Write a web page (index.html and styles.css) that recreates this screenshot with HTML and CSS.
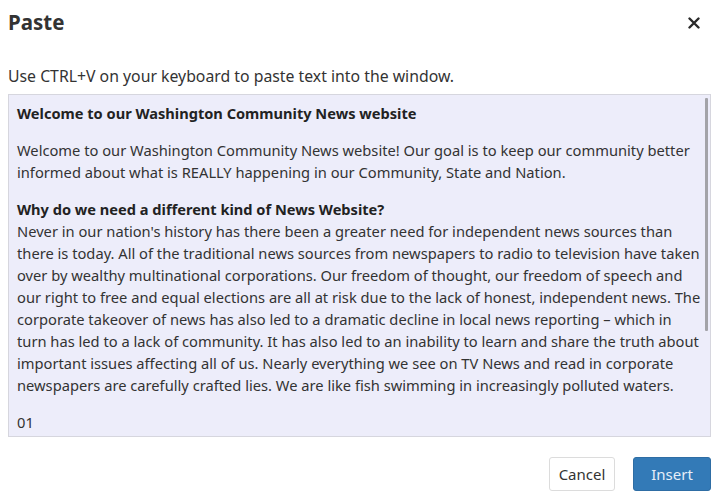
FILE: index.html
```html
<!DOCTYPE html>
<html>
<head>
<meta charset="utf-8">
<link rel="stylesheet" href="styles.css">
</head>
<body>
<div class="dialog">
  <div class="header">
    <h1 class="title">Paste</h1>
    <button class="close" aria-label="Close">
      <svg width="12" height="12" viewBox="0 0 12 12"><path d="M1.5 1.5 L10.5 10.5 M10.5 1.5 L1.5 10.5" stroke="#2a2a2a" stroke-width="2.4" stroke-linecap="round"/></svg>
    </button>
  </div>
  <p class="hint">Use CTRL+V on your keyboard to paste text into the window.</p>
  <div class="pastebox">
    <div class="pastecontent">
      <h2 class="ph">Welcome to our Washington Community News website</h2>
      <p class="pp">Welcome to our Washington Community News website! Our goal is to keep our community better informed about what is REALLY happening in our Community, State and Nation.</p>
      <h2 class="ph tight">Why do we need a different kind of News Website?</h2>
      <p class="pp">Never in our nation's history has there been a greater need for independent news sources than there is today. All of the traditional news sources from newspapers to radio to television have taken over by wealthy multinational corporations. Our freedom of thought, our freedom of speech and our right to free and equal elections are all at risk due to the lack of honest, independent news. The corporate takeover of news has also led to a dramatic decline in local news reporting – which in turn has led to a lack of community. It has also led to an inability to learn and share the truth about important issues affecting all of us. Nearly everything we see on TV News and read in corporate newspapers are carefully crafted lies. We are like fish swimming in increasingly polluted waters.</p>
      <p class="pp">01</p>
    </div>
    <div class="thumb"></div>
  </div>
  <div class="footer">
    <button class="btn cancel">Cancel</button>
    <button class="btn insert">Insert</button>
  </div>
</div>
</body>
</html>
```

FILE: styles.css
```css
html, body {
  margin: 0;
  padding: 0;
  background: #fff;
}
body {
  font-family: "Noto Sans", "Open Sans", sans-serif;
  color: #333;
}
.dialog {
  width: 718px;
  height: 498px;
  padding: 0 7px 0 8px;
  box-sizing: border-box;
  display: flex;
  flex-direction: column;
}
.header {
  display: flex;
  justify-content: space-between;
  align-items: center;
  height: 42px;
  padding-top: 2px;
  box-sizing: border-box;
}
.title {
  margin: 0;
  font-size: 20.5px;
  font-weight: 700;
  color: #333;
}
.close {
  border: 0;
  background: none;
  padding: 0;
  margin-right: 10px;
  margin-top: 2px;
  width: 14px;
  height: 14px;
  display: flex;
  align-items: center;
  justify-content: center;
}
.hint {
  margin: 23px 0 0 0;
  font-size: 15.8px;
  line-height: 22px;
}
.pastebox {
  position: relative;
  margin-top: 7px;
  height: 343px;
  box-sizing: border-box;
  border: 1px solid #d6d6de;
  background: #ededfa;
  overflow: hidden;
}
.pastecontent {
  padding: 7px 8px 0 8px;
  font-size: 14.7px;
  line-height: 22px;
  color: #333;
}
.thumb {
  position: absolute;
  left: 696px;
  top: 3px;
  width: 3px;
  height: 233px;
  background: #a3a3a8;
  border-radius: 1px;
}
.ph {
  margin: 0 0 15px 0;
  font-size: 14.6px;
  font-weight: 700;
  line-height: 22px;
  color: #222;
}
.ph.tight {
  margin-bottom: 0;
}
.pp {
  margin: 0 0 15px 0;
}
.footer {
  display: flex;
  justify-content: flex-end;
  gap: 18px;
  margin-top: 20px;
}
.btn {
  height: 34px;
  font-family: "Noto Sans", "Open Sans", sans-serif;
  font-size: 15px;
  border-radius: 3px;
  padding: 0 14px;
}
.cancel {
  background: #fff;
  border: 1px solid #dcdcdc;
  color: #333;
  width: 66px;
  padding: 0;
}
.insert {
  background: #337ab7;
  border: 1px solid #2e6da4;
  color: #e6eef8;
  width: 78px;
  padding: 0;
}
```
